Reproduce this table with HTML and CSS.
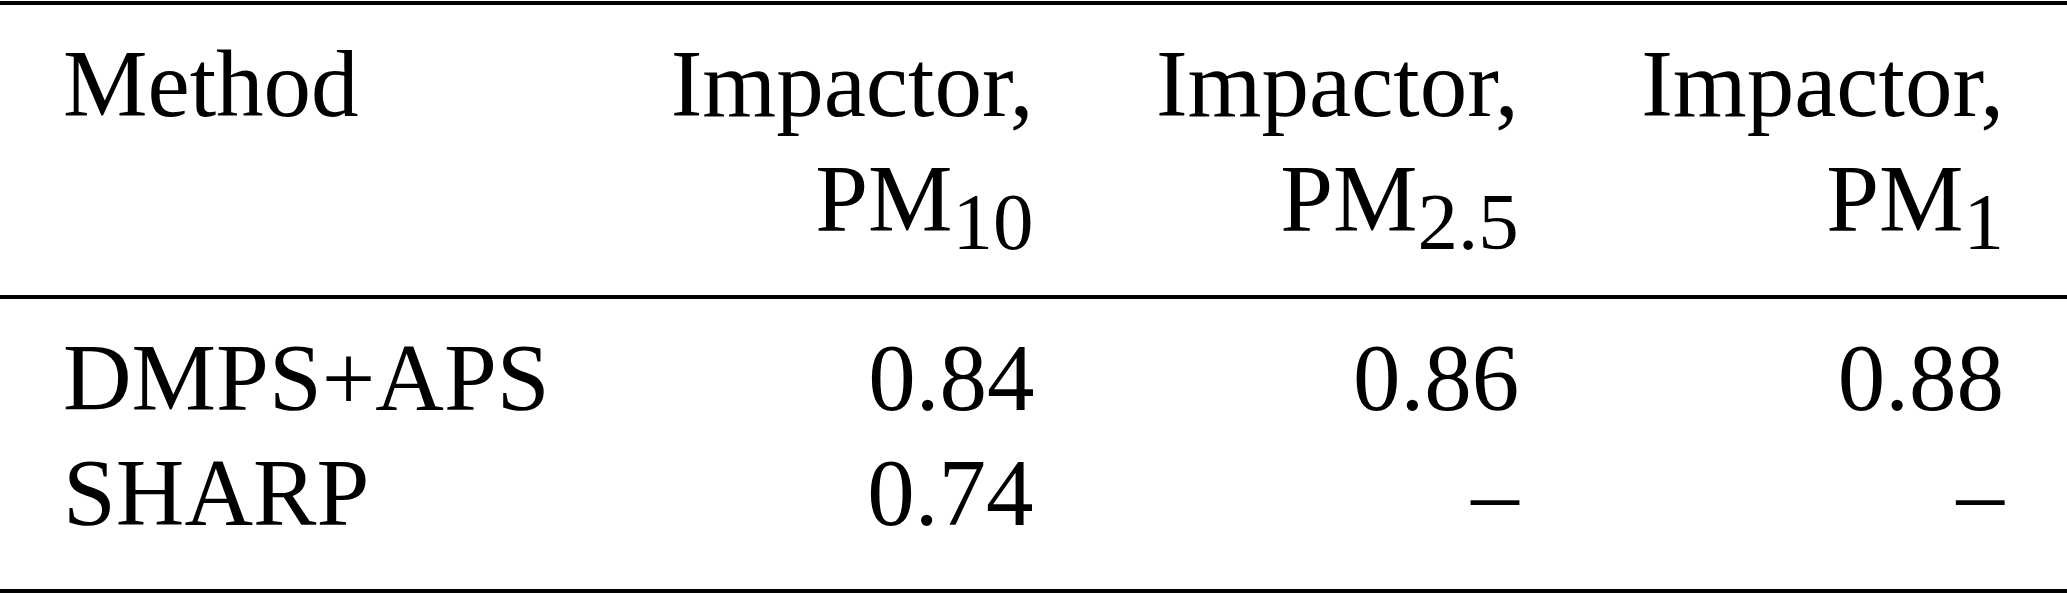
FILE: index.html
```html
<!DOCTYPE html>
<html lang="en">
<head>
<meta charset="utf-8">
<title>Correlation table</title>
<link rel="stylesheet" href="styles.css">
</head>
<body>
<div class="table" role="table">
  <div class="section head" role="rowgroup">
    <div class="row" role="row">
      <div class="cell left" role="columnheader">Method</div>
      <div class="cell" role="columnheader">Impactor,<br>PM<sub class="sub">10</sub></div>
      <div class="cell" role="columnheader">Impactor,<br>PM<sub class="sub">2.5</sub></div>
      <div class="cell" role="columnheader">Impactor,<br>PM<sub class="sub">1</sub></div>
    </div>
  </div>
  <div class="section body" role="rowgroup">
    <div class="row" role="row">
      <div class="cell left" role="cell">DMPS+APS</div>
      <div class="cell" role="cell">0.84</div>
      <div class="cell" role="cell">0.86</div>
      <div class="cell" role="cell">0.88</div>
    </div>
    <div class="row" role="row">
      <div class="cell left" role="cell">SHARP</div>
      <div class="cell" role="cell">0.74</div>
      <div class="cell" role="cell">–</div>
      <div class="cell" role="cell">–</div>
    </div>
  </div>
</div>
</body>
</html>
```

FILE: styles.css
```css
html, body {
  margin: 0;
  padding: 0;
  background: #fff;
}

body {
  padding-top: 1px;
  font-family: "Liberation Serif", "Times New Roman", serif;
  font-size: 95px;
  line-height: 115px;
  color: #000;
}

.table {
  border-top: 4px solid #000;
  border-bottom: 4px solid #000;
}

.section {
  padding: 21.5px 63px 38.5px;
}

.head {
  border-bottom: 4px solid #000;
}

.row {
  display: grid;
  grid-template-columns: repeat(4, 1fr);
}

.cell {
  text-align: right;
  white-space: nowrap;
}

.cell.left {
  text-align: left;
}

.sub {
  font-size: 81px;
  line-height: 0;
  vertical-align: -18px;
}
```
